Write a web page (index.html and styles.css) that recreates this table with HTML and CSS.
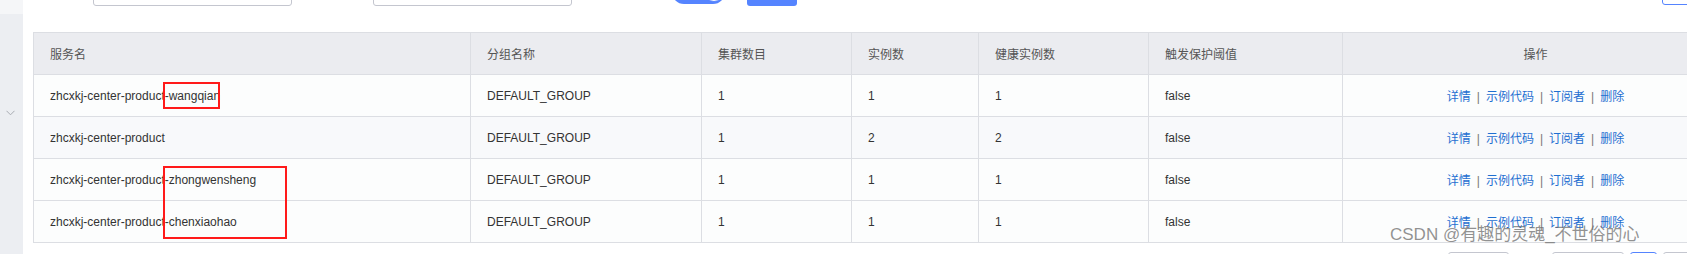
FILE: index.html
```html
<!DOCTYPE html>
<html lang="zh-CN">
<head>
<meta charset="utf-8">
<title>服务列表</title>
<link rel="stylesheet" href="styles.css">
</head>
<body>
<div class="app">
  <aside class="sidebar">
    <div class="side-item"></div>
    <div class="side-group">
      <svg class="chev" width="9" height="6" viewBox="0 0 9 6"><path d="M0.5 0.8 L4.5 4.8 L8.5 0.8" fill="none" stroke="#a9acb3" stroke-width="1"/></svg>
    </div>
  </aside>
  <main class="main">
    <div class="toolbar">
      <div class="input in1"></div>
      <div class="input in2"></div>
      <div class="switch"><span class="knob"></span></div>
      <div class="btn-primary"></div>
      <div class="btn-outline"></div>
    </div>
    <table class="grid">
      <colgroup>
        <col class="c1"><col class="c2"><col class="c3"><col class="c4"><col class="c5"><col class="c6"><col class="c7">
      </colgroup>
      <thead>
        <tr><th>服务名</th><th>分组名称</th><th>集群数目</th><th>实例数</th><th>健康实例数</th><th>触发保护阈值</th><th class="center">操作</th></tr>
      </thead>
      <tbody>
        <tr><td>zhcxkj-center-product-wangqian</td><td>DEFAULT_GROUP</td><td>1</td><td>1</td><td>1</td><td>false</td><td class="center ops"><a>详情</a><span class="sep">|</span><a>示例代码</a><span class="sep">|</span><a>订阅者</a><span class="sep">|</span><a>删除</a></td></tr>
        <tr class="hover"><td>zhcxkj-center-product</td><td>DEFAULT_GROUP</td><td>1</td><td>2</td><td>2</td><td>false</td><td class="center ops"><a>详情</a><span class="sep">|</span><a>示例代码</a><span class="sep">|</span><a>订阅者</a><span class="sep">|</span><a>删除</a></td></tr>
        <tr><td>zhcxkj-center-product-zhongwensheng</td><td>DEFAULT_GROUP</td><td>1</td><td>1</td><td>1</td><td>false</td><td class="center ops"><a>详情</a><span class="sep">|</span><a>示例代码</a><span class="sep">|</span><a>订阅者</a><span class="sep">|</span><a>删除</a></td></tr>
        <tr><td>zhcxkj-center-product-chenxiaohao</td><td>DEFAULT_GROUP</td><td>1</td><td>1</td><td>1</td><td>false</td><td class="center ops"><a>详情</a><span class="sep">|</span><a>示例代码</a><span class="sep">|</span><a>订阅者</a><span class="sep">|</span><a>删除</a></td></tr>
      </tbody>
    </table>
    <div class="pager">
      <div class="pg pg-size"></div>
      <div class="pg pg-prev"></div>
      <div class="pg pg-cur"></div>
      <div class="pg pg-next"></div>
    </div>
  </main>
</div>
<div class="mark mark1"></div>
<div class="mark mark2"></div>
<div class="watermark">CSDN @有趣的灵魂_不世俗的心</div>
</body>
</html>
```

FILE: styles.css
```css
html, body {
  margin: 0;
  padding: 0;
  background: #ffffff;
  overflow: hidden;
  height: 254px;
}
body {
  font-family: "Liberation Sans", "Noto Sans CJK SC", sans-serif;
  font-size: 12px;
  color: #333333;
  position: relative;
}
.app {
  display: flex;
  height: 254px;
  overflow: hidden;
}
.sidebar {
  width: 23px;
  flex: 0 0 23px;
  background: #eceef2;
  display: flex;
  flex-direction: column;
}
.side-item {
  height: 14px;
  background: #f5f6f8;
}
.side-group {
  height: 101px;
  display: flex;
  align-items: flex-end;
  padding-left: 6px;
}
.chev {
  display: block;
  margin-bottom: -1px;
}
.main {
  flex: 1;
  min-width: 0;
  padding-left: 10px;
}
.toolbar {
  display: flex;
  align-items: center;
  height: 28px;
  margin-top: -22px;
}
.input {
  height: 26px;
  width: 197px;
  border: 1px solid #c4c6cf;
  border-radius: 3px;
  background: #fff;
  flex: 0 0 auto;
}
.in1 { margin-left: 60px; }
.in2 { margin-left: 81px; }
.switch {
  margin-left: 100px;
  width: 53px;
  height: 24px;
  border-radius: 12px;
  background: #5584ff;
  display: flex;
  align-items: center;
  justify-content: flex-end;
  padding-right: 1px;
  box-sizing: border-box;
  flex: 0 0 auto;
}
.knob {
  width: 20px;
  height: 20px;
  border-radius: 50%;
  background: #fff;
  border: 1px solid #5584ff;
  box-sizing: border-box;
}
.btn-primary {
  margin-left: 22px;
  width: 50px;
  height: 28px;
  border-radius: 3px;
  background: #5584ff;
  flex: 0 0 auto;
}
.btn-outline {
  margin-left: 865px;
  width: 60px;
  height: 26px;
  border: 1px solid #5584ff;
  border-radius: 3px;
  flex: 0 0 auto;
  margin-top: -2px;
}
.grid {
  margin-top: 26px;
  border-collapse: collapse;
  table-layout: fixed;
  width: 1695px;
  border: 1px solid #dcdee3;
}
.c1 { width: 437px; }
.c2 { width: 231px; }
.c3 { width: 150px; }
.c4 { width: 127px; }
.c5 { width: 170px; }
.c6 { width: 194px; }
.c7 { width: 386px; }
.grid th, .grid td {
  height: 42px;
  padding: 0 16px;
  border: 1px solid #dcdee3;
  text-align: left;
  white-space: nowrap;
  box-sizing: border-box;
}
.grid th {
  background: #ebecf0;
  font-weight: normal;
  color: #555555;
}
.grid td {
  background: #fcfdfd;
}
.grid tr.hover td {
  background: #f8f9fb;
}
.grid .center {
  text-align: center;
}
.ops a {
  color: #1f6fd1;
  text-decoration: none;
}
.ops .sep {
  color: #777777;
  margin: 0 6px;
}
.pager {
  display: flex;
  margin-top: 9px;
  padding-left: 1415px;
}
.pg {
  height: 26px;
  border: 1px solid #c4c6cf;
  border-radius: 3px;
  flex: 0 0 auto;
}
.pg-size { width: 59px; }
.pg-prev { width: 70px; margin-left: 43px; }
.pg-cur { width: 25px; margin-left: 6px; border-color: #5584ff; }
.pg-next { width: 28px; margin-left: 6px; }
.mark {
  position: absolute;
  border: 2px solid #ff1a1a;
  box-sizing: border-box;
}
.mark1 {
  left: 163px;
  top: 82px;
  width: 57px;
  height: 27px;
}
.mark2 {
  left: 163px;
  top: 166px;
  width: 124px;
  height: 73px;
}
.watermark {
  position: absolute;
  left: 1390px;
  top: 224px;
  font-size: 17px;
  line-height: 22px;
  color: rgba(110, 110, 110, 0.75);
  white-space: nowrap;
  font-family: "Liberation Sans", "Noto Sans CJK SC", sans-serif;
}
```
